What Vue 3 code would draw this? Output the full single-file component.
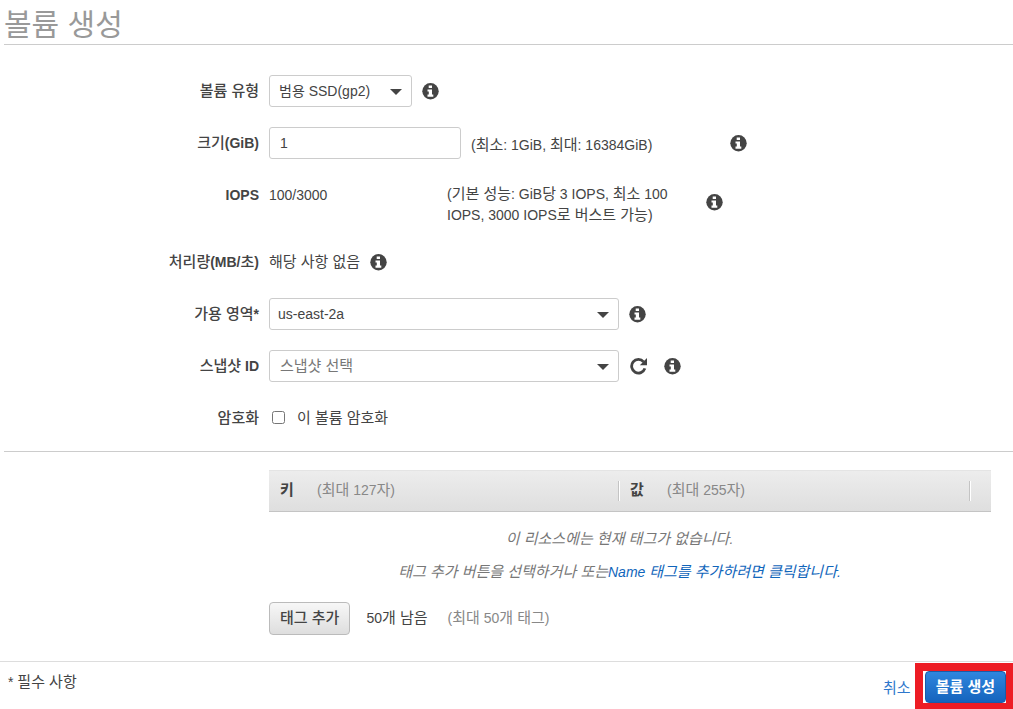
<script setup>
import { h, ref } from 'vue'

const volumeType = ref('gp2')
const size = ref('1')
const zone = ref('us-east-2a')
const snapshot = ref('')
const encrypted = ref(false)

// Hangul runs are set one pixel larger than the Latin text around them.
const Mixed = (props) =>
  h('span', props.text.split(/([가-힣]+(?: [가-힣]+)*)/).map((part) =>
    /[가-힣]/.test(part) ? h('span', { class: 'ko' }, part) : part))
Mixed.props = ['text']

const InfoIcon = () =>
  h('svg', { class: 'info', viewBox: '0 0 17 17', width: 17, height: 17, role: 'img', 'aria-label': '정보' }, [
    h('circle', { cx: 8.5, cy: 8.2, r: 8.2, fill: '#444' }),
    h('path', { d: 'M6.7 2.4h3.3v2.7H6.7zM5.5 6.4h4.5v5.2h1.3v2.1H5.5v-2.1h1.3V8.4H5.5z', fill: '#fff' }),
  ])
</script>

<template>
  <main class="page">
    <h1>볼륨 생성</h1>

    <form class="form" @submit.prevent>
      <div class="row">
        <label class="label" for="type"><Mixed text="볼륨 유형" /></label>
        <div class="field">
          <span class="select type">
            <select id="type" v-model="volumeType"><option value="gp2">범용 SSD(gp2)</option></select>
            <svg class="caret" viewBox="0 0 12 6"><path d="M0 0h12L6 6z" /></svg>
          </span>
          <InfoIcon />
        </div>
      </div>

      <div class="row">
        <label class="label" for="size"><Mixed text="크기(GiB)" /></label>
        <div class="field">
          <input id="size" v-model="size" class="text" type="text">
          <Mixed class="hint" text="(최소: 1GiB, 최대: 16384GiB)" />
          <InfoIcon />
        </div>
      </div>

      <div class="row iops">
        <span class="label">IOPS</span>
        <div class="field">
          <span class="value">100/3000</span>
          <Mixed class="hint" text="(기본 성능: GiB당 3 IOPS, 최소 100 IOPS, 3000 IOPS로 버스트 가능)" />
          <InfoIcon />
        </div>
      </div>

      <div class="row">
        <span class="label"><Mixed text="처리량(MB/초)" /></span>
        <div class="field">
          <Mixed text="해당 사항 없음" />
          <InfoIcon />
        </div>
      </div>

      <div class="row">
        <label class="label" for="zone"><Mixed text="가용 영역*" /></label>
        <div class="field">
          <span class="select wide">
            <select id="zone" v-model="zone" class="latin"><option>us-east-2a</option></select>
            <svg class="caret" viewBox="0 0 12 6"><path d="M0 0h12L6 6z" /></svg>
          </span>
          <InfoIcon />
        </div>
      </div>

      <div class="row">
        <label class="label" for="snapshot"><Mixed text="스냅샷 ID" /></label>
        <div class="field">
          <span class="select wide">
            <select id="snapshot" v-model="snapshot" class="empty"><option value="">스냅샷 선택</option></select>
            <svg class="caret" viewBox="0 0 12 6"><path d="M0 0h12L6 6z" /></svg>
          </span>
          <button class="refresh" type="button" aria-label="새로 고침">
            <svg viewBox="0 0 19 18" width="19" height="18">
              <path d="M14.6 4.8A6.8 6.8 0 1 0 15.9 11.4" fill="none" stroke="#444" stroke-width="2.8" />
              <path d="M18 1v7.2h-7.2z" fill="#444" />
            </svg>
          </button>
          <InfoIcon />
        </div>
      </div>

      <div class="row">
        <span class="label"><Mixed text="암호화" /></span>
        <div class="field">
          <label class="check"><input v-model="encrypted" type="checkbox"><Mixed text="이 볼륨 암호화" /></label>
        </div>
      </div>
    </form>

    <section class="tags">
      <table>
        <colgroup><col class="key"><col class="val"><col></colgroup>
        <thead>
          <tr>
            <th scope="col"><div class="head"><Mixed class="name" text="키" /><Mixed class="limit" text="(최대 127자)" /></div></th>
            <th scope="col"><div class="head"><Mixed class="name" text="값" /><Mixed class="limit" text="(최대 255자)" /></div></th>
            <td></td>
          </tr>
        </thead>
        <tbody>
          <tr>
            <td colspan="2" class="none">
              <p><Mixed text="이 리소스에는 현재 태그가 없습니다." /></p>
              <p><Mixed text="태그 추가 버튼을 선택하거나 또는" /><a href="#"><Mixed text="Name 태그를 추가하려면 클릭합니다." /></a></p>
            </td>
            <td></td>
          </tr>
        </tbody>
      </table>
      <div class="add">
        <button class="btn" type="button">태그 추가</button>
        <Mixed class="left" text="50개 남음" />
        <Mixed class="limit" text="(최대 50개 태그)" />
      </div>
    </section>

    <footer>
      <Mixed class="required" text="* 필수 사항" />
      <a class="cancel" href="#"><Mixed text="취소" /></a>
      <div class="mark"><button class="btn primary" type="submit">볼륨 생성</button></div>
    </footer>
  </main>
</template>

<style>
body {
  background: #fff;
}

.ko {
  font-size: 15px;
  line-height: 1;
}

.info {
  flex: none;
  display: block;
}
</style>

<style scoped>
.page {
  font: 14px/21px "Liberation Sans", "Noto Sans CJK KR", sans-serif;
  color: #444;
  overflow: hidden;
}

h1 {
  margin: 0 0 0 4px;
  padding-top: 6px;
  border-bottom: 1px solid #ccc;
  font-size: 30px;
  line-height: 38px;
  font-weight: 400;
  color: #999;
}

.form {
  display: flex;
  flex-direction: column;
  gap: 20px;
  margin-left: 4px;
  padding: 30px 0 17px;
  border-bottom: 1px solid #ccc;
}

.row {
  display: grid;
  grid-template-columns: 255px 1fr;
  gap: 10px;
}

.label {
  text-align: right;
  font-weight: 700;
  line-height: 32px;
}

.label :deep(.ko) {
  font-weight: 500;
}

.field {
  display: flex;
  align-items: center;
  gap: 10px;
  min-height: 32px;
}

.iops .field {
  min-height: 47px;
}

.iops .value {
  width: 168px;
  align-self: flex-start;
  line-height: 32px;
}

.hint {
  width: 249px;
  padding-top: 4px;
}

.iops .hint {
  align-self: flex-end;
}

select,
input,
button {
  font: inherit;
  color: inherit;
}

.select {
  position: relative;
  display: block;
}

.type {
  width: 143px;
}

.wide {
  width: 350px;
}

.select select,
.text {
  box-sizing: border-box;
  width: 100%;
  height: 32px;
  padding: 0 24px 0 9px;
  border: 1px solid #ccc;
  border-radius: 3px;
  background: #fff;
  appearance: none;
}

.select .latin {
  padding-left: 8px;
}

.select .empty {
  padding-left: 10px;
  padding-bottom: 2px;
  font-size: 15px;
  color: #777;
}

.text {
  width: 192px;
  padding: 0 10px;
}

.caret {
  position: absolute;
  right: 10px;
  top: 14px;
  width: 12px;
  height: 6px;
  fill: #444;
  pointer-events: none;
}

.refresh {
  display: block;
  margin-right: 6px;
  padding: 0;
  border: 0;
  background: none;
}

.refresh svg {
  display: block;
}

.check {
  display: flex;
  align-items: center;
  gap: 12px;
}

.check input {
  width: 13px;
  height: 13px;
  margin: 0 0 2px 3px;
}

.tags {
  margin: 18px 22px 0 269px;
}

table {
  width: 100%;
  table-layout: fixed;
  border-collapse: separate;
  border-spacing: 0;
}

.key {
  width: 350px;
}

.val {
  width: 351px;
}

thead {
  background: linear-gradient(#ededed, #dedede);
}

thead th,
thead td {
  height: 40px;
  border-top: 1px solid #e4e4e4;
  border-bottom: 1px solid #c4c4c4;
}

th,
td {
  padding: 0;
}

.head {
  display: flex;
  height: 20px;
  padding-left: 11px;
  border-right: 1px solid #c4c4c4;
  box-shadow: 1px 0 #fff;
  line-height: 18px;
}

.name {
  width: 37px;
  text-align: left;
}

.limit {
  font-weight: 400;
  color: #888;
}

.none {
  padding-top: 11px;
  text-align: center;
  font-style: italic;
  color: #777;
}

.none p {
  margin: 0;
  line-height: 33px;
}

a {
  color: #1166bb;
  text-decoration: none;
}

.add {
  display: flex;
  align-items: center;
  margin-top: 13px;
}

.btn {
  height: 33px;
  padding: 0 10px 2px;
  border: 1px solid #bbb;
  border-radius: 4px;
  background: linear-gradient(#f7f7f7, #dedede);
  font-size: 15px;
  font-weight: 500;
}

.left {
  margin: 0 20px 0 16px;
}

footer {
  display: flex;
  margin-top: 26px;
  border-top: 1px solid #ddd;
}

.required {
  margin: 10px auto 0 8px;
}

.cancel {
  margin: 16px 4px 0 0;
  color: #2e77cc;
}

.mark {
  margin-top: 1px;
  padding-left: 2px;
  border: solid #ed1c24;
  border-width: 8px 7px 6px 8px;
}

.primary {
  display: block;
  height: 32px;
  border-color: #1a5ba8;
  background: linear-gradient(#2f86de, #1564bd);
  color: #fff;
  font-weight: 700;
}
</style>
